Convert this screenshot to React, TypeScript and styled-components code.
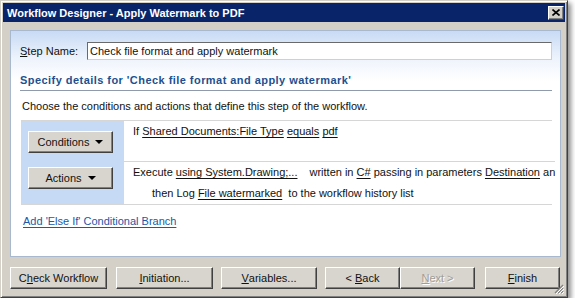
import React from "react";
import styled, { createGlobalStyle } from "styled-components";

const GlobalStyle = createGlobalStyle`
  html, body {
    margin: 0;
    padding: 0;
    background: #ffffff;
  }
  body {
    font-family: "Liberation Sans", Arial, sans-serif;
    font-size: 11px;
    color: #111;
  }
`;

// ── window chrome ───────────────────────────────────────────────
const Window = styled.div`
  position: relative;
  width: 568px;
  height: 298px;
  box-sizing: border-box;
  background: #d4d0c8;
  border: 1px solid;
  border-color: #d4d0c8 #404040 #404040 #d4d0c8;
  box-shadow: inset 1px 1px #ffffff, inset -1px -1px #808080,
    3px 3px 5px rgba(0, 0, 0, 0.45);
  padding: 2px;
  display: flex;
  flex-direction: column;
`;

const TitleBar = styled.div`
  height: 19px;
  flex-shrink: 0;
  background: #0a246a;
  display: flex;
  align-items: center;
  justify-content: space-between;
  padding: 0 1px 0 4px;
`;

const Title = styled.span`
  color: #fff;
  font-weight: bold;
  font-size: 11px;
`;

const CloseBox = styled.div`
  width: 14px;
  height: 12px;
  background: #d4d0c8;
  border: 1px solid;
  border-color: #fff #404040 #404040 #fff;
  box-shadow: inset -1px -1px #808080;
  display: flex;
  align-items: center;
  justify-content: center;
`;

const Body = styled.div`
  flex: 1;
  display: flex;
  flex-direction: column;
  padding: 8px 4px 0 7px;
`;

// ── main panel ──────────────────────────────────────────────────
const Panel = styled.div`
  height: 227px;
  box-sizing: border-box;
  border: 1px solid #a7b8cf;
  background: linear-gradient(to bottom, #c8daf5 0px, #eef4fc 28px, #ffffff 50px);
  padding: 0 8px 0 9px;
  display: flex;
  flex-direction: column;
`;

const StepRow = styled.div`
  display: flex;
  align-items: center;
  margin-top: 11px;
  height: 18px;
`;

const Label = styled.span`
  width: 67px;
  flex-shrink: 0;
`;

const TextBox = styled.div`
  flex: 1;
  height: 18px;
  box-sizing: border-box;
  background: #fff;
  border: 1px solid;
  border-color: #6a6a6a #d4d0c8 #d4d0c8 #6a6a6a;
  padding-left: 2px;
  line-height: 16px;
  white-space: nowrap;
  overflow: hidden;
`;

const SectionHeader = styled.div`
  margin-top: 13px;
  line-height: 14px;
  padding-bottom: 3px;
  border-bottom: 1px solid #8f9bab;
  color: #22508f;
  font-weight: bold;
  font-size: 11px;
  letter-spacing: 0.45px;
`;

const Hint = styled.div`
  margin-top: 8px;
  line-height: 14px;
  padding-left: 2px;
`;

// ── condition / action table ────────────────────────────────────
const Table = styled.div`
  margin-top: 7px;
  margin-left: 1px;
  display: grid;
  grid-template-columns: 103px 1fr;
  grid-template-rows: 41px 42px;
  border-top: 1px solid #d6d6d6;
  border-bottom: 1px solid #d6d6d6;
`;

const SideCell = styled.div<{ $pt: number }>`
  background: #c6daf6;
  padding: ${(p) => p.$pt}px 0 0 7px;
`;

const TextCell = styled.div<{ $line?: boolean }>`
  box-sizing: border-box;
  padding-left: 9px;
  line-height: 21px;
  white-space: nowrap;
  border-bottom: ${(p) => (p.$line ? "1px solid #d6d6d6" : "none")};
`;

const Indent = styled.div`
  padding-left: 19px;
`;

const Token = styled.span`
  text-decoration: underline;
  text-underline-offset: 2px;
`;

const Spacer = styled.span`
  display: inline-block;
  width: 12px;
`;

const MenuButton = styled.div`
  width: 85px;
  height: 22px;
  box-sizing: border-box;
  background: #d8d5ce;
  border: 1px solid;
  border-color: #fff #404040 #404040 #fff;
  box-shadow: inset -1px -1px #808080;
  display: flex;
  align-items: center;
  justify-content: center;
  gap: 6px;
`;

const Arrow = styled.span`
  width: 0;
  height: 0;
  border-left: 4px solid transparent;
  border-right: 4px solid transparent;
  border-top: 4px solid #000;
`;

const Link = styled.div`
  margin-top: 9px;
  padding-left: 3px;
  line-height: 14px;
  color: #2058a8;
  text-decoration: underline;
  text-underline-offset: 2px;
`;

// ── footer buttons ──────────────────────────────────────────────
const Footer = styled.div`
  display: flex;
  margin-top: 10px;
`;

const Button = styled.div<{ $w: number; $ml: number; $disabled?: boolean }>`
  width: ${(p) => p.$w}px;
  margin-left: ${(p) => p.$ml}px;
  height: 22px;
  box-sizing: border-box;
  background: #d8d5ce;
  border: 1px solid;
  border-color: #fff #404040 #404040 #fff;
  box-shadow: inset -1px -1px #808080;
  display: flex;
  align-items: center;
  justify-content: center;
  color: ${(p) => (p.$disabled ? "#a09d96" : "#111")};
  text-shadow: ${(p) => (p.$disabled ? "1px 1px #ffffff" : "none")};
`;

const Grip = styled.svg`
  position: absolute;
  right: 3px;
  bottom: 3px;
`;

export default function App() {
  return (
    <>
      <GlobalStyle />
      <Window>
        <TitleBar>
          <Title>Workflow Designer - Apply Watermark to PDF</Title>
          <CloseBox>
            <svg width="8" height="7" viewBox="0 0 8 7">
              <path d="M0.5 0.5 L7.5 6.5 M7.5 0.5 L0.5 6.5" stroke="#000" strokeWidth="1.6" />
            </svg>
          </CloseBox>
        </TitleBar>

        <Body>
          <Panel>
            <StepRow>
              <Label>
                <u>S</u>tep Name:
              </Label>
              <TextBox>Check file format and apply watermark</TextBox>
            </StepRow>

            <SectionHeader>
              Specify details for 'Check file format and apply watermark'
            </SectionHeader>

            <Hint>Choose the conditions and actions that define this step of the workflow.</Hint>

            <Table>
              <SideCell $pt={10}>
                <MenuButton>
                  Conditions <Arrow />
                </MenuButton>
              </SideCell>
              <TextCell $line>
                If <Token>Shared Documents:File Type</Token> <Token>equals</Token>{" "}
                <Token>pdf</Token>
              </TextCell>
              <SideCell $pt={5}>
                <MenuButton>
                  Actions <Arrow />
                </MenuButton>
              </SideCell>
              <TextCell>
                <div>
                  Execute <Token>using System.Drawing;...</Token>
                  <Spacer />
                  written in <Token>C#</Token> passing in parameters{" "}
                  <Token>Destination</Token> an
                </div>
                <Indent>
                  then Log <Token>File watermarked</Token>&nbsp; to the workflow history list
                </Indent>
              </TextCell>
            </Table>

            <Link>Add 'Else If' Conditional Branch</Link>
          </Panel>

          <Footer>
            <Button $w={97} $ml={0}>
              C<u>h</u>eck Workflow
            </Button>
            <Button $w={97} $ml={9}>
              <u>I</u>nitiation...
            </Button>
            <Button $w={96} $ml={8}>
              <u>V</u>ariables...
            </Button>
            <Button $w={75} $ml={8}>
              &lt;&nbsp;<u>B</u>ack
            </Button>
            <Button $w={75} $ml={0} $disabled>
              <u>N</u>ext&nbsp;&gt;
            </Button>
            <Button $w={75} $ml={10}>
              <u>F</u>inish
            </Button>
          </Footer>
        </Body>

        <Grip width="10" height="10" viewBox="0 0 10 10">
          <path d="M9 1 L1 9 M9 4 L4 9 M9 7 L7 9" stroke="#808080" strokeWidth="1.2" />
          <path d="M10 2 L2 10 M10 5 L5 10 M10 8 L8 10" stroke="#ffffff" strokeWidth="1" />
        </Grip>
      </Window>
    </>
  );
}
